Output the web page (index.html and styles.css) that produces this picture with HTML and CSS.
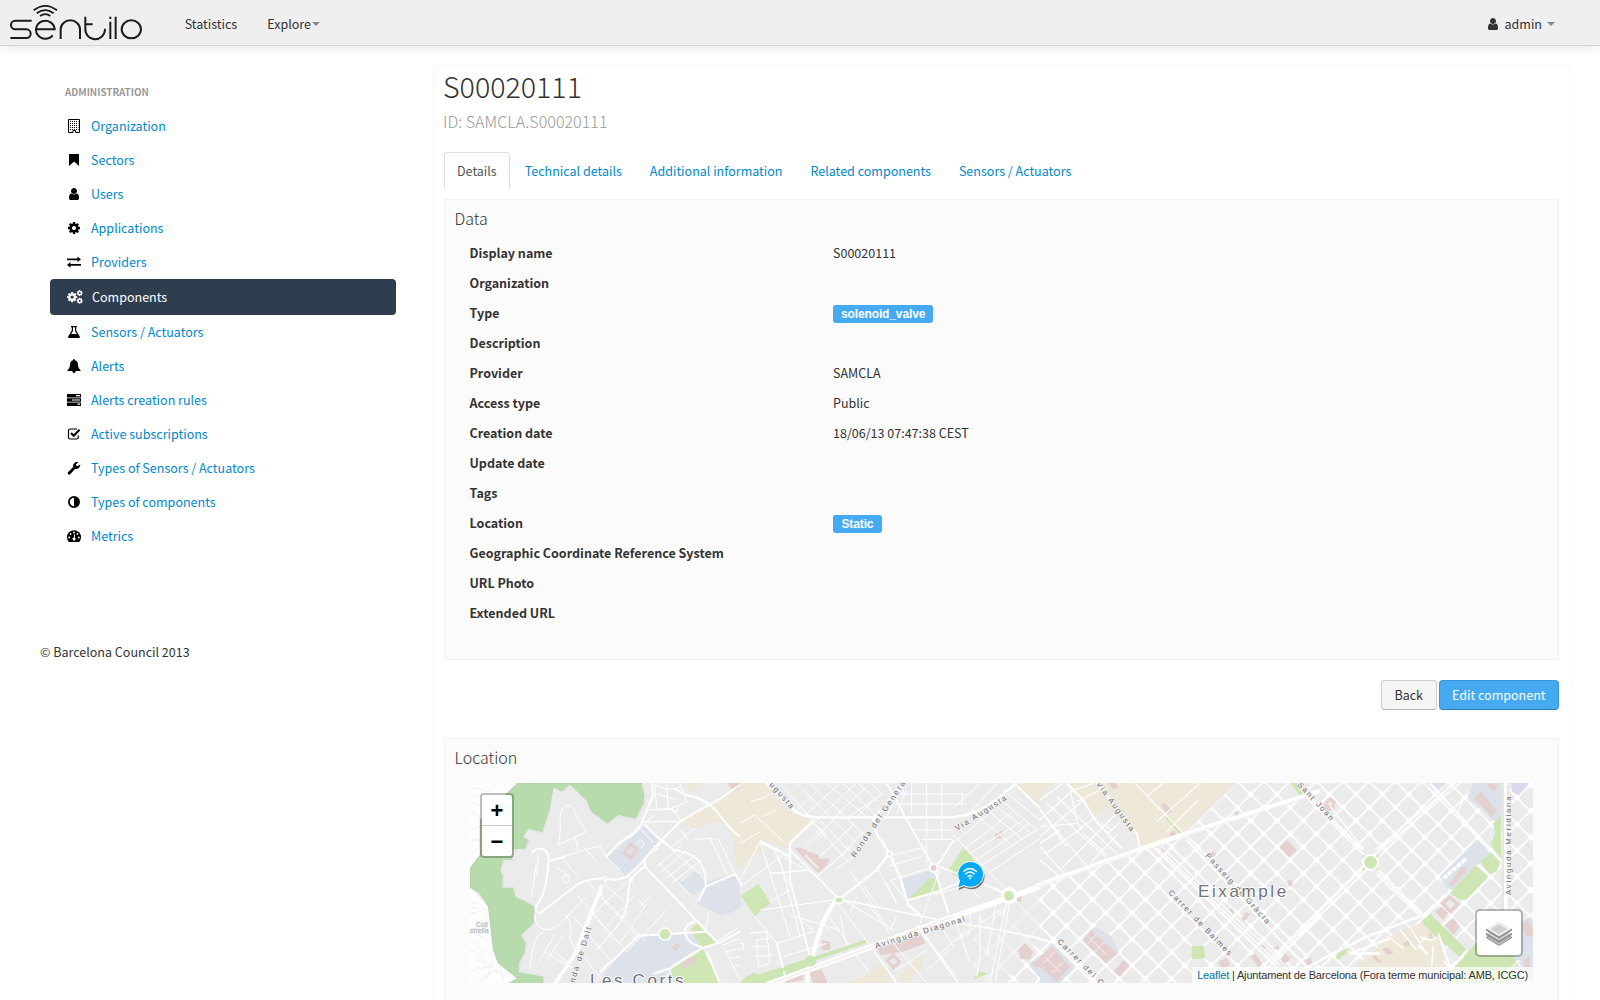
FILE: index.html
```html
<!DOCTYPE html>
<html lang="en">
<head>
<meta charset="utf-8">
<title>Sentilo - S00020111</title>
<link rel="stylesheet" href="styles.css">
</head>
<body>
<header class="navbar">
  <svg class="logo" viewBox="0 0 440 130" role="img" aria-label="sentilo">
    <g fill="none" stroke="#1b1b1b" stroke-width="6">
      <path d="M95 62H46a13 13 0 0 0 0 26H79a13 13 0 0 1 0 26H31"/>
      <path d="M108 88H164A28 27 0 1 0 158 106M108 88H164"/>
      <path d="M182 117V88a29 27 0 0 1 58 0V117"/>
      <path d="M256 50V86a29 29 0 0 0 59 4V86M256 73H278"/>
      <path d="M331 65V117M347 50V117M331 50V57"/>
      <ellipse cx="394" cy="88" rx="29" ry="27"/>
      <path d="M101 31Q136 4 171 31M110 40Q136 21 161 40M120 48Q136 37 151 48" stroke-width="5.5"/>
    </g>
  </svg>
  <nav class="topnav">
    <a>Statistics</a>
    <a>Explore<i class="caret"></i></a>
  </nav>
  <a class="account">
    <svg class="ico-user" viewBox="0 0 1792 1792"><path d="M1536 1399q0 109-62.5 187t-150.5 78h-854q-88 0-150.5-78t-62.5-187q0-85 8.5-160.5t31.5-152 58.5-131 94-89 134.5-34.5q131 128 313 128t313-128q76 0 134.5 34.5t94 89 58.5 131 31.5 152 8.5 160.5zm-256-887q0 159-112.5 271.5t-271.5 112.5-271.5-112.5-112.5-271.5 112.5-271.5 271.5-112.5 271.5 112.5 112.5 271.5z"/></svg>
    <span>admin</span><i class="caret"></i>
  </a>
</header>

<div class="page">
  <aside class="sidebar">
    <div class="menu">
      <h6>Administration</h6>
      <a><svg viewBox="0 0 14 14"><path d="M1.5.5H12.500V13.500H8.500V11.500H6V13.500H1.500Z" fill="none" stroke="#000"/><path d="M3 2.500H11.500M3 4.500H11.500M3 6.500H11.500M3 8.500H11.500M3 10.500H11.500" stroke="#000" stroke-dasharray="1 1"/></svg>Organization</a>
      <a><svg viewBox="0 0 14 14"><path d="M2.500 1H11.500Q12 1 12 1.500V13L7.200 8.600 2 13V1.500Q2 1 2.500 1Z"/></svg>Sectors</a>
      <a><svg viewBox="0 0 1792 1792"><path d="M1536 1399q0 109-62.5 187t-150.5 78h-854q-88 0-150.5-78t-62.5-187q0-85 8.5-160.5t31.5-152 58.5-131 94-89 134.5-34.500q131 128 313 128t313-128q76 0 134.5 34.500t94 89 58.500 131 31.500 152 8.500 160.500zm-256-887q0 159-112.500 271.500t-271.500 112.500-271.500-112.500-112.500-271.500 112.500-271.500 271.500-112.500 271.500 112.500 112.500 271.500z"/></svg>Users</a>
      <a><svg viewBox="0 0 1792 1792"><path id="cog" d="M1152 896q0-106-75-181t-181-75-181 75-75 181 75 181 181 75 181-75 75-181zm512-109v222q0 12-8 23t-20 13l-185 28q-19 54-39 91 35 50 107 138 10 12 10 25t-9 23q-27 37-99 108t-94 71q-12 0-26-9l-138-108q-44 23-91 38-16 136-29 186-7 28-36 28h-222q-14 0-24.500-8.500t-11.500-21.500l-28-184q-49-16-90-37l-141 107q-10 9-25 9-14 0-25-11-126-114-165-168-7-10-7-23 0-12 8-23 15-21 51-66.500t54-70.500q-27-50-41-99l-183-27q-13-2-21-12.500t-8-23.500v-222q0-12 8-23t19-13l186-28q14-46 39-92-40-57-107-138-10-12-10-24 0-10 9-23 26-36 98.500-107.500t94.500-71.500q13 0 26 10l138 107q44-23 91-38 16-136 29-186 7-28 36-28h222q14 0 24.500 8.500t11.500 21.500l28 184q49 16 90 37l142-107q9-9 24-9 13 0 25 10 129 119 165 170 7 8 7 22 0 12-8 23-15 21-51 66.500t-54 70.500q26 50 41 98l183 28q13 2 21 12.500t8 23.500z"/></svg>Applications</a>
      <a><svg viewBox="0 0 14 14"><path d="M0 3.500H10.500V1.500L14 4.300 10.500 7V5.200H0ZM14 9H3.500V7L0 9.900 3.500 12.700V10.700H14Z"/></svg>Providers</a>
      <a class="active"><svg class="wide" viewBox="0 0 16 14"><g fill="#fff"><use href="#cog" transform="translate(-.8 1.200) scale(.0066)"/><use href="#cog" transform="translate(9.200 -.4) scale(.0039)"/><use href="#cog" transform="translate(9.200 7.300) scale(.0039)"/></g></svg>Components</a>
      <a><svg viewBox="0 0 14 14"><path d="M4 1H10V2.200H9.200V5.500L12.800 11.500Q13.300 13 12 13H2Q.7 13 1.200 11.500L4.800 5.500V2.200H4ZM6 2.200V6L4.200 9H9.800L8 6V2.200Z" fill-rule="evenodd"/></svg>Sensors / Actuators</a>
      <a><svg viewBox="0 0 14 14"><path d="M7 0Q8 0 7.900 1.200Q11 2 11 6Q11 9 13.500 11.200V12H8.800Q8.600 14 7 14T5.200 12H.5V11.200Q3 9 3 6Q3 2 6.100 1.200Q6 0 7 0Z"/></svg>Alerts</a>
      <a><svg viewBox="0 0 14 14"><path d="M0 1H14V4.500H0ZM0 5.300H14V8.700H0ZM0 9.500H14V13H0Z"/><path d="M9 2.700H13M5 7H13M10.500 11.200H13" stroke="#fff" stroke-width="1.200"/></svg>Alerts creation rules</a>
      <a><svg viewBox="0 0 14 14"><path d="M10 2H3Q1.500 2 1.500 3.500V10.500Q1.500 12 3 12H9.500Q11.200 12 11.200 10.500V8.500" fill="none" stroke="#000" stroke-width="1.200"/><path d="M4 6L6.700 8.700 12.500 2.800" fill="none" stroke="#000" stroke-width="2.200"/></svg>Active subscriptions</a>
      <a><svg viewBox="0 0 14 14"><path d="M1.200 13.200Q0 12 1.200 10.900L6.200 6Q5.600 3.700 7.200 2.200 9 .4 11.500 1.200L9 3.200 9.300 4.800 11 5 13.200 3.200Q13.400 5.700 11.500 7.200 10 8.300 8.200 7.800L3.400 13Q2.300 14.200 1.200 13.200Z"/></svg>Types of Sensors / Actuators</a>
      <a><svg viewBox="0 0 14 14"><path d="M7 1A6 6 0 1 1 7 13A6 6 0 1 1 7 1ZM7 2.800A4.200 4.200 0 0 0 7 11.200Z" fill-rule="evenodd"/></svg>Types of components</a>
      <a><svg viewBox="0 0 14 14"><path d="M1.800 13Q0 11 0 8.300A7 7 0 0 1 14 8.300Q14 11 12.200 13Z"/><g fill="#fff"><circle cx="2.200" cy="8.500" r=".9"/><circle cx="3.600" cy="5" r=".9"/><circle cx="7" cy="3.500" r=".9"/><circle cx="10.400" cy="5" r=".9"/><circle cx="11.800" cy="8.500" r=".9"/><path d="M7.300 5.200L8.200 5.400 7.700 8.600A1.500 1.500 0 1 1 6.700 8.500Z"/></g></svg>Metrics</a>
    </div>
    <footer>© Barcelona Council 2013</footer>
  </aside>

  <main class="content">
    <h1>S00020111</h1>
    <p class="lead">ID: SAMCLA.S00020111</p>
    <nav class="tabs">
      <a class="on">Details</a>
      <a>Technical details</a>
      <a>Additional information</a>
      <a>Related components</a>
      <a>Sensors / Actuators</a>
    </nav>

    <section class="panel data">
      <h4>Data</h4>
      <dl>
        <dt>Display name</dt><dd>S00020111</dd>
        <dt>Organization</dt><dd></dd>
        <dt>Type</dt><dd><span class="label">solenoid_valve</span></dd>
        <dt>Description</dt><dd></dd>
        <dt>Provider</dt><dd>SAMCLA</dd>
        <dt>Access type</dt><dd>Public</dd>
        <dt>Creation date</dt><dd>18/06/13 07:47:38 CEST</dd>
        <dt>Update date</dt><dd></dd>
        <dt>Tags</dt><dd></dd>
        <dt>Location</dt><dd><span class="label static">Static</span></dd>
        <dt>Geographic Coordinate Reference System</dt><dd></dd>
        <dt>URL Photo</dt><dd></dd>
        <dt>Extended URL</dt><dd></dd>
      </dl>
    </section>

    <div class="actions">
      <button class="btn">Back</button>
      <button class="btn primary">Edit component</button>
    </div>

    <section class="panel place">
      <h4>Location</h4>
      <div class="map">
        <svg class="tiles" viewBox="0 0 1063 200">
          <defs>
            <pattern id="blocks" width="79" height="79" patternUnits="userSpaceOnUse" patternTransform="translate(316 310)">
              <path d="M-5-5L84 84M84-5L-5 84" stroke="#fff" stroke-width="5"/>
              <g fill="#fff"><circle r="8"/><circle cx="79" r="8"/><circle cy="79" r="8"/><circle cx="79" cy="79" r="8"/><circle cx="39.500" cy="39.500" r="8"/></g>
            </pattern>
            <pattern id="blocks-east" href="#blocks" patternTransform="translate(1076 281)"/>
          </defs>
          <rect width="1063" height="200" fill="#ebebeb"/>

          <!-- Eixample grid and the east side -->
          <g transform="translate(570 -13) scale(.33333)">
            <path fill="url(#blocks)" d="M-200 650L-200 455 0 350 430 195 590 39H1234L640 650Z"/>
            <path fill="url(#blocks-east)" d="M1234 39H1490V650H622Z"/>
            <path fill="#ebebeb" d="M-215 436L0 352 0 500-120 650H-260Z" opacity=".6"/>
          </g>

          <!-- Collserola, Sarria and Les Corts -->
          <g transform="translate(-30 -13) scale(.33333)">
            <path fill="#fdfdfd" d="M90 39H235L120 255 90 295ZM90 352L145 410 160 540 175 580 232 625 200 639H90Z"/>
            <g fill="none" stroke="#d2d2d2" stroke-width="1.800" stroke-dasharray="3 3">
              <path d="M90 58Q110 50 128 60T165 45M90 75Q110 80 125 70M90 100Q108 95 118 108M90 125Q112 130 120 150M90 180L118 168M90 220Q110 200 120 215M95 250L118 235"/>
              <path d="M90 400Q120 390 135 420T130 450M90 415Q112 405 125 430M90 430L115 425M100 490Q140 500 150 530M95 510L140 560M92 540Q130 550 135 590M110 570Q150 575 170 610M95 600L150 590M120 635L165 600 205 622M180 590L190 632M140 625L160 560"/>
            </g>
            <path fill="#b8dbae" stroke="#a9b8a4" stroke-width="1.500" d="M232 39H605L615 75 612 100 588 148 535 136 502 162 452 125 440 95 390 44 367 66 342 55 330 120 308 188 265 178 250 200 268 210 257 237 220 240 218 272 192 270 182 300 190 320 188 352 220 352 228 380 260 395 285 410 283 460 245 495 258 520 255 550 238 580V606L308 618V645H200L232 625 175 580 160 540 150 450 145 410 120 370 90 352V295L120 255V150Z"/>
            <path fill="none" stroke="#ebebeb" stroke-width="3" d="M605 41L615 75 612 100 588 148 535 136 502 162 452 125 440 95 390 44 367 66 342 55 330 120 308 188 265 178 250 200 268 210 257 237 220 240 218 272 192 270 182 300 190 320 188 352 220 352 228 380 260 395 285 410 283 460 245 495 258 520 255 550 238 580V606L308 618"/>
            <g fill="#dce1ea">
              <path d="M502 262L612 168 662 210 560 322ZM702 325L728 335 765 305 798 335 885 312 900 345V415L848 438 772 402 798 350 760 375Z"/>
              <path d="M475 639L500 600 595 500 760 488 785 530 700 580 660 639Z"/>
            </g>
            <path fill="#eee8d8" d="M735 39H785L750 68ZM720 158L770 125 830 90 900 42V290L888 298 880 200 860 170 835 155 765 173 730 170Z"/>
            <path fill="#cde6b3" d="M752 480L770 458 830 522 785 532 840 639H705L692 597 785 537Z"/>
            <g fill="#e5d0d0">
              <path fill-rule="evenodd" d="M546 250L572 215 598 238 574 272ZM558 246L572 256 586 240 573 228Z"/>
              <path d="M695 530L712 518 720 528 708 543ZM722 588L738 565 768 560 770 575 735 596ZM862 39H897V55L880 65Z"/>
            </g>
            <g fill="none" stroke="#fff" stroke-width="3">
              <path d="M355 225Q365 180 360 140 362 105 388 107 405 112 405 130L440 185 355 225M405 200L415 245M430 230L470 275M290 320L295 250M275 380L288 285M365 325L380 315 390 330 375 340ZM372 272L412 315M345 290L390 320M480 230Q490 245 500 262L540 300M350 268Q420 240 482 228"/>
              <path d="M285 430Q283 480 325 480 365 465 390 430L440 380M378 435Q400 470 390 500L410 555M270 600Q275 500 310 485M300 575L345 490M325 565L370 495M310 545L410 600M345 545Q370 570 390 580"/>
              <path d="M440 335L620 515M470 345Q490 360 485 385L592 498M495 325V345L550 390M410 375L560 545M460 430L520 510M480 530L570 420M560 545L680 420M540 520L620 400M500 470L580 380M470 540L540 460M450 440L560 335M600 410L630 378M597 388L610 408M400 440L510 570"/>
              <path d="M560 200L645 135M590 165L640 218M640 250L670 210M640 225Q650 260 655 215M590 223L600 208 612 218 605 235M650 290L725 225M665 305L740 240M680 325L765 255M695 340L785 270M660 280L745 370M700 245L780 310M690 235L765 175M720 180L745 210M765 210Q800 200 835 208L885 310M810 205L860 310"/>
              <path d="M645 42L650 120 700 118M625 120L700 115 740 95 720 40M650 72L710 90M680 40L685 120M610 155H720M705 125L725 160M640 42Q690 70 720 50M805 425L798 485M830 515L900 470M850 525L900 505M860 545L900 535M870 565L900 560M880 590L900 585M850 530L900 630M435 560L460 600 500 639"/>
            </g>
            <g fill="none" stroke="#fff" stroke-width="6">
              <path d="M275 250Q285 232 310 237 330 250 325 280 320 370 290 405 280 425 300 430L410 345Q440 325 495 325 530 335 560 320 600 285 610 270L665 210 720 155 770 125 835 90 900 45"/>
              <path d="M325 275Q340 268 375 262M572 320Q565 360 562 400 555 440 540 445M615 290Q580 310 575 335M665 210L700 240Q740 245 770 265 800 295 797 350L775 395M797 350L885 312L905 345M615 165Q680 230 665 210M700 55L740 75Q800 85 835 130 870 180 900 200M580 505L600 497 798 485M480 605L595 500"/>
              <path d="M615 265Q610 290 625 300L835 520 900 485M800 545L840 640M690 595L785 535 830 520M735 485Q735 460 765 455M735 490Q745 525 785 530M640 612L690 595M500 260Q540 210 570 200 600 180 612 140L640 75 635 39"/>
            </g>
            <path fill="none" stroke="#fff" stroke-width="10" d="M486 347L407 557M470 385L400 560 345 640"/>
            <circle cx="495" cy="325" r="6" fill="#ebebeb" stroke="#fff" stroke-width="4"/><circle cx="705" cy="117" r="8" fill="#ebebeb" stroke="#fff" stroke-width="4"/>
            <circle cx="675" cy="492" r="18" fill="#cde6b3" stroke="#fff" stroke-width="4"/>
          </g>

          <!-- Sant Gervasi, Diagonal -->
          <g transform="translate(270 -13) scale(.33333)">
            <path fill="#eee8d8" d="M0 39H72L120 100 180 140 222 150 150 235 60 213 72 238 0 290ZM822 39H900V110L860 75ZM325 639L390 610 420 572 465 639ZM470 630L545 550 545 595 500 639Z"/>
            <g fill="#dce1ea"><path d="M487 328L575 300 600 335 500 392ZM865 580L900 560V625ZM0 390L12 408H0Z"/></g>
            <g fill="#cde6b3">
              <path d="M2 378L55 342 92 400 45 438ZM625 302L670 232 705 272 650 320ZM502 392L568 323 592 328 598 362ZM0 639L20 618 60 612 378 510V518L230 570 195 600 100 639ZM697 630L718 602 742 612Z"/>
            </g>
            <g fill="#e5d0d0">
              <path d="M163 235L180 233 235 255 245 268 270 265 262 285 235 308ZM412 535L545 495 555 520 490 545 420 555ZM205 605L245 598 262 639H220ZM245 510L270 515V540L245 540ZM138 625L190 610V630L140 639ZM765 190L788 182V205L768 208ZM835 540L855 520 880 545 870 570 840 565ZM830 382L845 378V395L832 395ZM875 580L900 565V590L885 595Z"/>
              <path fill-rule="evenodd" d="M436 570L460 548 484 575 460 600ZM448 572L460 585 472 574 461 563Z"/>
            </g>
            <path fill="none" stroke="#ebebeb" stroke-width="8" d="M195 255L235 295"/>
            <g fill="none" stroke="#fff" stroke-width="3">
              <path d="M0 160L45 135 130 215M0 220L60 185M30 95Q70 90 100 65M65 140L110 120M120 40L260 200M170 40L345 215M210 40L395 215M260 40L390 150M310 40L410 140M355 40L415 95M395 40L430 75M160 130L255 40M190 140L300 40M230 150L350 40M275 150L380 50M310 150L430 70M345 145L400 90"/>
              <path d="M215 155L330 280M240 150L330 245M150 240L290 380M130 260L235 320M200 225L275 155M235 265L340 165M270 290L370 185M285 300L350 255M230 320L335 230M230 185L242 175 255 188 243 200Z"/>
              <path d="M490 40V75M515 40V130M560 40V280M605 40V210M667 70V105M470 72H690M465 102H680M470 130L500 60M515 180H640M545 208H640M480 60L440 140M640 115L720 40M680 140L770 40M705 130L820 230M730 110L850 210M750 95L875 190M770 80L890 180M790 60L900 150M640 195L790 350M640 220L760 120M670 240L810 130M690 250L850 150M710 270L870 160M725 285L890 180M745 310L900 205"/>
              <path d="M440 260L560 230M440 290L545 260M455 330L600 285M440 340L470 400M410 290L470 400M370 345L410 405M330 300L440 470M450 330L505 395M540 460L600 300M590 310L630 440M580 375L700 340M650 310L720 385M690 290L730 340L810 380"/>
              <path d="M0 330L60 215M60 215L150 500M110 235L180 500M0 350L130 255M100 235L150 350M45 440L110 520 135 610M90 395L150 360M60 420L280 390M150 435L300 480M110 520L220 485M130 560L260 520M260 430L385 605M300 435L320 530M290 395L400 540M310 390L460 480M380 395L450 490M220 480L170 440M450 480L470 440M350 380L330 430M230 440L270 480"/>
              <path d="M30 490L80 485 90 580 55 590 50 510 90 505M35 530L90 530M45 560L100 555M0 520H10V540H0M460 520L560 639M550 490L650 620M590 450L640 530M640 430L690 580M690 430Q695 480 680 500M770 390L740 560M800 390L750 639M810 390L765 639M720 430V560L710 620M650 510L780 420M600 550L680 480M560 600L640 530M470 600L560 540"/>
            </g>
            <g fill="none" stroke="#fff" stroke-width="7">
              <path d="M80 39L155 115Q180 140 230 142H640Q720 130 780 80L830 39M490 39L400 145Q400 190 430 220L448 250 480 320 505 405 545 440M222 150L150 220 150 260 60 215M298 388L410 300 448 250"/>
              <path d="M150 240L150 330 210 560M90 310L205 300M110 520L135 620M150 240L298 388M440 40Q475 100 490 130L580 290 625 430M600 290L810 375M310 390L600 450 780 480 900 505M500 392L600 362 700 320M400 540L470 639M530 465L655 639" stroke-width="5"/>
              <path d="M825 42L900 115M640 210L600 275 580 290" stroke-width="5"/>
            </g>
            <path fill="none" stroke="#fff" stroke-width="13" d="M290 390Q245 440 218 560L205 600 202 640"/>
            <path fill="none" stroke="#fff" stroke-width="17" d="M80 645L380 535 600 455 900 350"/>
            <path fill="none" stroke="#dedacb" stroke-width="2" d="M90 642L380 535 640 440"/>
            <path fill="none" stroke="#cde6b3" stroke-width="10" d="M20 638L200 575 378 514"/>
            <circle cx="42" cy="625" r="16" fill="#cde6b3"/><circle cx="212" cy="573" r="17" fill="#cde6b3"/>
            <ellipse cx="297" cy="390" rx="13" ry="10" fill="#cde6b3" stroke="#fff" stroke-width="5"/>
            <circle cx="448" cy="252" r="8" fill="#ebebeb" stroke="#fff" stroke-width="5"/>
            <circle cx="581" cy="294" r="12" fill="#e5d0d0" stroke="#fff" stroke-width="6"/>
            <circle cx="807" cy="377" r="20" fill="#cde6b3" stroke="#fff" stroke-width="10"/>
          </g>

          <!-- Gracia and Eixample -->
          <g transform="translate(570 -13) scale(.33333)">
            <path fill="#ebebeb" d="M0 39H80L165 150 290 220 300 235 0 335Z"/>
            <path fill="#eee8d8" d="M78 39H588L430 190 302 238 275 180 200 110 165 148 130 90ZM0 39H40L0 85Z"/>
            <g fill="#dce1ea"><path d="M125 510L165 470 215 500 237 548 200 582ZM0 560L40 518 108 585 60 639H0Z"/></g>
            <g fill="#e5d0d0">
              <path d="M130 510L155 480 230 550 198 580ZM0 560L35 530 90 590 50 635 0 590ZM222 605L250 570 268 588 240 620ZM720 232L740 210 770 240 748 262ZM362 105L375 98 397 125 380 132ZM388 190L402 182 407 195 395 202ZM360 238L375 232 380 242 368 248ZM205 39H225L235 50 220 58ZM605 445L620 425 630 433 612 455ZM567 422L575 415 585 430 575 435ZM512 250L522 243 528 255 518 262ZM740 335L752 328 760 345 748 350ZM585 125H593V137H585ZM632 560L645 550 668 582 655 592ZM535 575L560 565 570 585 545 600ZM660 530L672 518 680 530 668 540ZM698 535L715 525 718 540ZM720 570L735 552 752 565 738 580ZM798 575L810 562 820 580 810 588Z"/>
            </g>
            <path d="M145 500L200 555M170 490L145 520M195 515L165 545M15 560L60 605M45 545L10 580M70 575L35 610" stroke="#f0e4e6" stroke-width="4"/>
            <g fill="#cde6b3"><path d="M374 142L384 138 428 188 420 194ZM458 528H492L495 565 455 568V530ZM750 39H770L800 80 785 82ZM760 630L790 610 830 639Z"/></g>
            <g fill="none" stroke="#fff" stroke-width="3.500">
              <path d="M0 120L150 300M20 100L195 260M50 80L230 250M0 150L100 60M0 200L130 90M20 250L170 140M60 300L240 120M130 190L200 255M150 280L235 190M0 270L60 320M0 230L80 320M0 90L70 40M185 160L215 180 235 160M205 190L240 155M90 60L110 150 125 180M0 170L115 160"/>
              <path d="M285 40L435 195M350 155L480 40M320 80L370 39M380 185L475 90M90 65L160 40M110 95L180 60"/>
              <path d="M355 235L720 585M365 230L725 575M735 530L840 430M740 538L840 445M690 580L735 530" stroke-width="3.500"/>
              <path d="M345 235L740 620M440 210L739 530 790 580 850 635" stroke-width="6"/>
              <path d="M0 118L80 230M0 220L60 180" stroke-width="5"/>
            </g>
            <path fill="none" stroke="#fff" stroke-width="6" d="M170 39L290 190 302 240M80 39L130 90 165 150 245 235M-10 505L40 518 160 639"/>
            <path fill="none" stroke="#fff" stroke-width="14" d="M-10 347L300 238 435 192 840 64"/>
            <path fill="none" stroke="#e3e3e3" stroke-width="1.500" d="M-10 350L300 242M440 195L840 70"/>
          </g>

          <!-- Sagrada Familia, Arc de Triomf, Avinguda Meridiana -->
          <g transform="translate(830 -13) scale(.33333)">
            <path fill="#eee8d8" d="M185 575L270 500 370 455 420 510 430 570 440 605 400 639H150Z"/>
            <g fill="#dce1ea"><path d="M385 39H440L410 65ZM520 39H605V140L585 155 503 80ZM420 320L530 210 570 248 460 360 440 355ZM640 470L690 440 699 450V639H650Z"/></g>
            <path fill="#ded8ef" d="M635 39H688L655 75 637 65Z"/>
            <g fill="#e5d0d0">
              <path d="M522 85L545 65 590 125 575 140ZM560 42L590 39V62L575 60ZM445 345L485 290 500 295 495 310 455 350ZM435 465L460 445 480 470 460 495ZM405 425L425 410 445 430 430 450ZM245 540L262 530 280 550 265 555ZM215 560L225 555 245 575 235 580ZM310 520L325 510 330 525 315 530ZM385 490L395 488 398 505 388 505ZM670 570L690 560V590L675 595ZM665 470L680 450 699 475V495L680 500ZM15 575L30 560 38 578 25 590Z"/>
              <path fill-rule="evenodd" d="M420 400L448 375 480 402 452 432ZM436 402L451 418 466 402 450 388ZM70 105L90 80 108 95 100 120 78 125ZM82 105L95 112 98 98 88 93Z"/>
            </g>
            <g fill="#cde6b3"><path d="M450 368L530 285 565 315 560 325 500 388 480 390ZM540 275L575 245 600 275 590 305 570 312ZM580 160L603 138V265L572 225 585 190ZM368 450L392 433 500 540 480 562 370 465ZM460 595L530 515 640 550 650 585 620 639H440ZM107 560L130 528 142 530 140 548 115 570Z"/></g>
            <path stroke="#fff" stroke-width="11" stroke-dasharray="15 3" d="M430 325L500 265"/>
            <g fill="none" stroke="#fff" stroke-width="4">
              <path d="M-5 497L205 295M235 245L480 39M-8 488L195 290M225 240L465 39M185 240L165 215M235 310L370 440M228 312L362 440M90 110L190 235M265 500L310 535M330 470L380 555M300 480L350 540"/>
              <path d="M360 500Q390 520 412 500M375 500L355 530 385 550M400 525L395 590M450 600L500 540M580 639L660 570M650 570L690 639M530 285L570 320M497 75L470 130"/>
              <path d="M270 505L150 550H240M-10 610L80 560 200 500 370 435 435 375M390 39L600 270M0 55L190 240" stroke-width="7"/>
              <path d="M415 490L450 590 490 560" stroke-width="6"/>
            </g>
            <path fill="none" stroke="#fff" stroke-width="16" d="M615 39V430"/><path stroke="#ddd9cd" stroke-width="4" d="M609 39V430"/>
            <path stroke="#e8e0cc" stroke-width="4" d="M622 45L632 130M680 220L699 252"/>
            <circle cx="212" cy="277" r="26" fill="#fff"/><path fill="#cde6b3" d="M187 254L198 257 189 264ZM236 254L226 257 235 264ZM187 301L198 298 189 290ZM236 301L226 298 235 290Z"/><circle cx="212" cy="277" r="19" fill="#cde6b3"/>
          </g>

          <g class="street">
            <text transform="translate(104.500 200) rotate(-73)">nda de Dalt</text>
            <text transform="translate(299 2) rotate(48)">ugusta</text>
            <text transform="translate(385 75) rotate(-56)">Ronda del Genera</text>
            <text transform="translate(487 48) rotate(-32)">Via Augusta</text>
            <text transform="translate(406 165.500) rotate(-17)">Avinguda Diagonal</text>
            <text transform="translate(626 1) rotate(54)">Via Augusta</text>
            <text transform="translate(735 73) rotate(48)">Passeig de Gràcia</text>
            <text transform="translate(698 110) rotate(46)">Carrer de Balmes</text>
            <text transform="translate(587 159) rotate(45)">Carrer del C</text>
            <text transform="translate(827 2) rotate(47)">Sant Joan</text>
            <text transform="translate(1040.500 112) rotate(-90)">Avinguda Meridiana</text>
            <text x="6" y="144" class="peak">Coll</text><text x="0" y="150" class="peak">strella</text>
          </g>
          <g class="town">
            <text x="120" y="203">Les Corts</text>
            <text x="728" y="113.500">Eixample</text>
          </g>

          <!-- component marker -->
          <path fill="#555" opacity=".8" d="M487.500 105L489.500 98A12.900 12.900 0 1 1 494 102.500Z" transform="translate(1 2)"/>
          <path fill="#03a9f4" stroke="#fff" stroke-width="1" d="M487.500 105L489.500 98A12.900 12.900 0 1 1 494 102.500Z"/>
          <g fill="none" stroke="#fff" stroke-width="1.300" stroke-linecap="round"><path d="M493.500 88.500Q500 82.500 506.500 88.500M495.700 91Q500 87 504.300 91M497.900 93.400Q500 91.600 502.100 93.400"/><circle cx="500" cy="95.300" r=".5"/></g>
        </svg>
        <div class="zoom"><b>+</b><b>−</b></div>
        <div class="layers">
          <svg viewBox="0 0 26 26"><g stroke="#777" stroke-width=".7"><path fill="#bbb" d="M0 17.500L13 10 26 17.500 13 25.500Z"/><path fill="#d2d2d2" stroke="#fff" d="M0 14L13 6.500 26 14 13 22Z"/><path fill="#aaa" d="M0 13.300L13 21 26 13.300V14.500L13 22.300 0 14.500Z"/><path fill="#ececec" stroke="#fff" d="M0 9L13 1 26 9 13 17Z"/><path fill="#cfcfcf" stroke="none" d="M5 9L13 4.500 21 9 13 14Z"/><path fill="#999" d="M0 9L13 17 26 9V10L13 18 0 10Z"/></g></svg>
        </div>
        <div class="credit"><a>Leaflet</a> | Ajuntament de Barcelona (Fora terme municipal: AMB, ICGC)</div>
      </div>
    </section>
  </main>
</div>
</body>
</html>
```

FILE: styles.css
```css
* { box-sizing: border-box; }
body {
  margin: 0;
  height: 1000px;
  overflow: hidden;
  background: #fff;
  color: #333;
  font: 12.52px/20px "Noto Sans CJK SC", "Noto Sans", sans-serif;
}
h1, h4, h6, p, dl, dd { margin: 0; }

.navbar {
  position: relative;
  display: flex;
  align-items: center;
  height: 46px;
  padding-right: 45px;
  background: #efefef;
  border-bottom: 1px solid #d4d4d4;
  box-shadow: 0 1px 10px rgba(0, 0, 0, .1);
}
.logo { width: 146.67px; height: 43.33px; align-self: flex-start; }
.topnav { display: flex; gap: 30px; margin-left: 38px; padding-top: 3px; }
.topnav a { display: flex; align-items: center; }
.caret {
  width: 0;
  border: 4px solid transparent;
  border-top-color: #888;
  border-bottom: 0;
}
.topnav .caret { margin-left: 1px; }
.account { display: flex; align-items: center; margin-left: auto; padding-top: 3px; }
.account span { margin: 0 5px; }
.ico-user { width: 14px; height: 14px; fill: #333; }

.page { display: flex; align-items: flex-start; }
.sidebar { width: 433px; padding: 36px 37px 0 50px; }
.menu h6 {
  height: 27px;
  padding-left: 15px;
  color: #999;
  font-size: 9.8px;
  line-height: 20px;
  font-weight: 700;
  text-transform: uppercase;
}
.menu a {
  display: flex;
  align-items: center;
  gap: 10px;
  height: 34px;
  padding-left: 17px;
  color: #08c;
}
.menu svg { width: 14px; height: 14px; flex: none; }
.menu a .wide { width: 16px; }
.menu .active {
  height: 36px;
  gap: 9px;
  color: #fff;
  background: #2f3e4f;
  border-radius: 4px;
}
footer { margin: 89px 0 0 -10px; }

.content {
  width: 1138px;
  height: 960px;
  margin-top: 18px;
  padding: 0 11px 0 10px;
  border: 1px solid #f8f8f8;
}
h1 {
  padding-top: 1px;
  margin-left: -1px;
  font-size: 28.6px;
  line-height: 40px;
  font-weight: 300;
}
.lead {
  padding-top: 5px;
  margin-left: -1px;
  color: #999;
  font-size: 16.1px;
  line-height: 20px;
  font-weight: 300;
}
.tabs { display: flex; gap: 2px; margin-top: 21px; height: 37px; }
.tabs a { padding: 8px 12px; border: 1px solid transparent; color: #08c; line-height: 20px; }
.tabs .on {
  color: #555;
  background: #fff;
  border-color: #ddd;
  border-bottom: 0;
  border-radius: 4px 4px 0 0;
}
.panel { background: #fbfbfb; border: 1px solid #f2f2f5; }
.data { height: 461px; margin-top: 10px; }
.panel h4 { padding: 8px 0 0 9.5px; font-size: 16px; line-height: 20px; font-weight: 300; }
dl {
  display: grid;
  grid-template-columns: 363.5px 1fr;
  grid-auto-rows: 30px;
  align-items: center;
  padding: 10px 0 0 24.5px;
}
dt { font-weight: 700; }
.label {
  display: block;
  width: max-content;
  margin-top: 1px;
  padding: 0 8px;
  color: #fff;
  background: #46aaf2;
  border-radius: 3px;
  font: bold 12px/18px "Liberation Sans", Arial, sans-serif;
  letter-spacing: -.13px;
}
.static { padding: 0 8.5px; }
.actions { display: flex; justify-content: flex-end; gap: 2px; margin: 20px 0 28px; }
.btn {
  height: 30px;
  padding: 0 12.5px;
  color: #333;
  background: #f5f5f5;
  border: 1px solid #ccc;
  border-bottom-color: #b3b3b3;
  border-radius: 4px;
  font: inherit;
}
.primary { color: #fff; background: #46aaf2; border-color: #3a96dc; border-bottom-color: #2c7fbf; }

.place { height: 280px; }
.map { position: relative; width: 1063px; height: 200px; margin: 16px 0 0 25px; overflow: hidden; }
.tiles { display: block; width: 1063px; height: 200px; }
.street text {
  fill: #6c6c70;
  stroke: #f3f3f3;
  stroke-width: 1.5px;
  paint-order: stroke;
  font: 7.8px "Liberation Sans", Arial, sans-serif;
  letter-spacing: 1.75px;
}
.street .peak { fill: #aaa; letter-spacing: .2px; font-size: 6.5px; }
.town text {
  fill: #71717b;
  stroke: #fff;
  stroke-width: 2px;
  paint-order: stroke;
  font: 17px "Liberation Sans", Arial, sans-serif;
  letter-spacing: 2.6px;
}
.zoom {
  position: absolute;
  top: 10px;
  left: 10px;
  width: 34px;
  border: 2px solid rgba(0, 0, 0, .25);
  border-radius: 4px;
  background: #fff;
  background-clip: padding-box;
}
.zoom b {
  display: block;
  height: 30px;
  color: #000;
  text-align: center;
  font: bold 22px/31px "Liberation Sans", Arial, sans-serif;
}
.zoom b + b { height: 31px; border-top: 1px solid #ccc; }
.layers {
  position: absolute;
  right: 10px;
  bottom: 26px;
  display: grid;
  place-items: center;
  width: 48px;
  height: 48px;
  border: 2px solid rgba(0, 0, 0, .25);
  border-radius: 5px;
  background: #fff;
  background-clip: padding-box;
}
.layers svg { width: 26px; height: 26px; }
.credit {
  position: absolute;
  right: 0;
  bottom: 0;
  padding: 0 5px;
  background: rgba(255, 255, 255, .7);
  font: 11px/16px "Liberation Sans", Arial, sans-serif;
  letter-spacing: -.16px;
  white-space: nowrap;
}
.credit a { color: #0078a8; }
```
